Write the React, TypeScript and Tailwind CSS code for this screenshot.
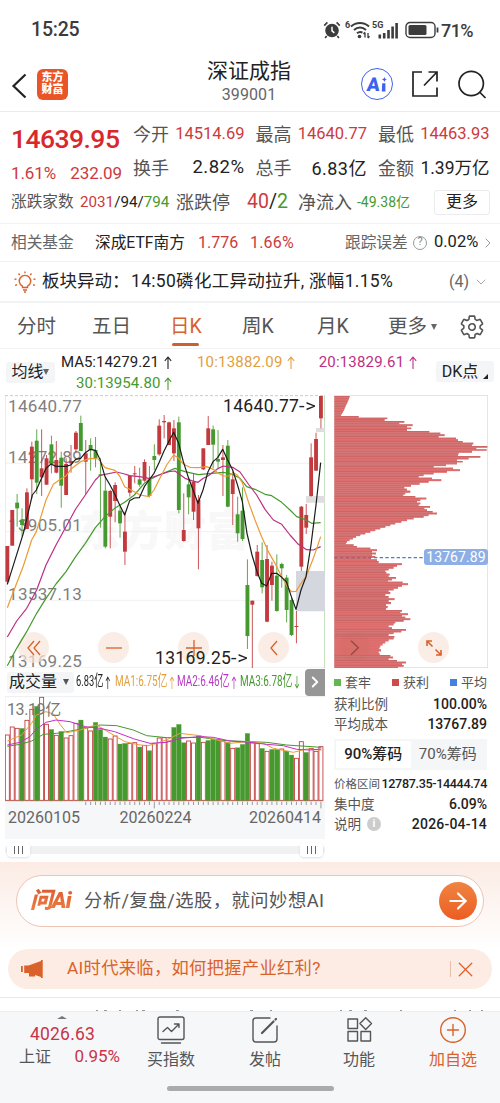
import { ReactNode } from 'react';
import { ArrowRight, ChevronDown, ChevronRight, X } from 'lucide-react';
import { IoSettingsOutline } from 'react-icons/io5';

type Candle = ['r' | 'g', number, number, number, number];
type Point = [number, number];

const RED = '#c23a3d';
const GREEN = '#46992f';
const STEP = 14.7;
const FIRST_X = 22;

// direction, high, body top, body bottom, low
const candles: Candle[] = [
  ['r', 468, 468, 575, 583], ['r', 360, 360, 467, 467], ['g', 312, 338, 355, 410], ['g', 355, 390, 405, 440],
  ['r', 295, 307, 417, 417], ['r', 155, 170, 268, 325], ['g', 118, 152, 278, 312], ['r', 118, 235, 262, 318],
  ['r', 195, 205, 284, 284], ['g', 137, 163, 222, 250], ['r', 153, 210, 248, 250], ['g', 185, 203, 287, 353],
  ['r', 205, 222, 315, 315], ['r', 165, 213, 220, 248], ['r', 123, 128, 178, 190], ['g', 77, 99, 183, 183],
  ['r', 150, 190, 215, 312], ['g', 145, 165, 180, 242], ['g', 141, 180, 205, 232], ['g', 205, 253, 257, 413],
  ['g', 262, 302, 470, 475], ['r', 300, 303, 380, 475], ['r', 277, 285, 333, 397], ['g', 350, 362, 400, 443],
  ['r', 365, 425, 485, 525], ['r', 255, 257, 308, 320], ['r', 228, 250, 253, 280], ['g', 233, 268, 284, 290],
  ['r', 208, 216, 272, 275], ['g', 228, 268, 318, 322], ['g', 163, 198, 210, 240], ['r', 88, 107, 193, 197],
  ['r', 75, 93, 97, 145], ['r', 95, 97, 165, 165], ['r', 90, 115, 190, 213], ['g', 80, 97, 360, 370],
  ['r', 310, 420, 453, 455], ['g', 270, 283, 322, 373], ['r', 252, 275, 365, 390], ['r', 315, 330, 415, 538],
  ['r', 175, 175, 238, 240], ['r', 78, 115, 165, 165], ['g', 107, 118, 164, 235], ['g', 120, 207, 215, 235],
  ['r', 165, 202, 210, 318], ['g', 150, 167, 350, 352], ['r', 245, 268, 312, 405], ['g', 320, 373, 430, 455],
  ['g', 292, 362, 447, 453], ['g', 508, 585, 738, 777], ['r', 632, 632, 644, 835], ['r', 465, 485, 558, 560],
  ['g', 457, 510, 592, 610], ['r', 465, 507, 695, 697], ['r', 515, 527, 585, 632], ['g', 493, 557, 663, 665],
  ['g', 518, 522, 535, 593], ['g', 555, 563, 660, 697], ['g', 620, 630, 735, 738], ['r', 663, 708, 711, 760],
  ['r', 348, 350, 530, 543], ['r', 342, 375, 413, 432], ['r', 160, 202, 318, 320], ['r', 128, 147, 242, 243],
  ['r', 18, 18, 85, 115],
];

const ma5: Point[] = [
  [22, 583], [70, 430], [97, 315], [109, 300], [138, 235], [153, 222], [168, 229], [198, 229], [212, 225], [227, 208],
  [242, 205], [256, 188], [271, 178], [286, 181], [300, 208], [315, 260], [330, 285], [344, 312], [359, 345], [374, 375],
  [389, 332], [403, 324], [418, 323], [433, 290], [447, 270], [462, 250], [477, 218], [491, 185], [506, 155], [521, 127],
  [536, 160], [550, 215], [565, 262], [580, 302], [594, 340], [609, 300], [624, 245], [639, 215], [653, 203], [668, 178],
  [683, 210], [698, 240], [712, 283], [727, 335], [741, 430], [756, 495], [771, 545], [785, 580], [800, 588], [815, 550],
  [830, 550], [845, 562], [859, 575], [874, 620], [888, 658], [903, 600], [918, 560], [933, 465], [948, 345], [962, 218],
];
const ma10: Point[] = [
  [22, 653], [50, 580], [70, 528], [95, 450], [109, 425], [138, 330], [160, 283], [185, 265], [198, 258], [212, 238],
  [242, 215], [271, 205], [295, 207], [315, 233], [345, 241], [359, 258], [374, 290], [403, 305], [420, 315], [447, 320],
  [462, 300], [477, 270], [500, 225], [521, 195], [536, 205], [550, 222], [570, 232], [595, 233], [620, 230], [640, 238],
  [653, 248], [670, 258], [687, 258], [700, 248], [712, 255], [727, 278], [745, 335], [765, 390], [785, 440], [805, 485],
  [825, 520], [845, 560], [862, 590], [874, 605], [888, 604], [903, 580], [918, 560], [940, 505], [962, 440],
];
const ma20: Point[] = [
  [22, 741], [50, 693], [80, 655], [110, 600], [138, 525], [168, 465], [198, 410], [227, 357], [256, 315], [286, 270],
  [300, 256], [350, 246], [374, 252], [389, 257], [418, 260], [447, 265], [477, 255], [506, 245], [525, 243], [555, 265],
  [575, 272], [594, 277], [610, 265], [625, 257], [655, 235], [670, 228], [698, 232], [720, 246], [745, 282], [770, 315],
  [795, 358], [820, 390], [845, 403], [870, 435], [895, 463], [920, 479], [940, 480], [962, 470],
];
const ma30: Point[] = [
  [22, 827], [50, 775], [80, 725], [110, 670], [138, 625], [168, 582], [198, 545], [227, 500], [256, 460], [286, 413],
  [315, 380], [344, 355], [374, 337], [403, 315], [433, 280], [447, 270], [477, 255], [506, 243], [525, 235], [555, 245],
  [595, 254], [635, 250], [670, 247], [695, 252], [720, 265], [740, 290], [765, 298], [795, 313], [815, 317], [845, 337],
  [870, 360], [890, 380], [915, 388], [935, 400], [962, 398],
];

const volumes: number[] = [
  210, 186, 190, 190, 166, 133, 124, 97, 178, 193, 211, 199, 219, 212, 175, 165, 187, 198, 172, 193, 216, 222, 213, 237,
  235, 235, 233, 246, 241, 257, 236, 219, 218, 228, 187, 178, 233, 228, 234, 211, 232, 226, 223, 224, 228, 232, 250, 248,
  238, 205, 234, 236, 250, 259, 253, 253, 252, 258, 270, 280, 230, 262, 250, 259, 245,
];
const volumeDirs = 'rrrgrrgrrgrgrrrgrrgggrrggrrgrgrrrrgggrrgrgggrgrgggrrgrggrggrrgrrr';

const volMa1: Point[] = [
  [22, 228], [65, 210], [95, 175], [109, 150], [138, 140], [160, 147], [180, 178], [200, 203], [240, 195], [270, 185],
  [290, 180], [320, 198], [345, 213], [375, 230], [410, 238], [440, 243], [480, 232], [510, 220], [540, 205], [600, 212],
  [640, 222], [690, 235], [740, 230], [790, 235], [820, 250], [880, 262], [920, 252], [964, 255],
];
const volMa2: Point[] = [
  [22, 240], [60, 232], [90, 215], [109, 192], [138, 172], [168, 165], [210, 170], [256, 185], [300, 190], [344, 200],
  [403, 222], [450, 235], [500, 232], [540, 220], [600, 215], [640, 217], [690, 228], [750, 232], [800, 238], [850, 242],
  [890, 253], [930, 255], [964, 252],
];
const volMa3: Point[] = [
  [22, 244], [60, 238], [95, 228], [130, 208], [170, 205], [212, 198], [270, 187], [300, 180], [350, 182], [400, 195],
  [440, 212], [500, 218], [600, 217], [680, 227], [750, 230], [800, 232], [860, 240], [964, 247],
];

// cost distribution: top edge of each bar and how far right it reaches
const chips: Point[] = [
  [18, 73], [23, 71], [28, 69], [33, 67], [38, 65], [43, 62], [48, 60], [53, 58], [58, 56], [63, 53], [68, 50], [73, 47],
  [78, 100], [83, 186], [87, 178], [93, 237], [98, 222], [103, 262], [108, 245], [113, 258], [117, 245], [123, 312],
  [128, 345], [133, 358], [138, 340], [143, 392], [148, 398], [153, 412], [158, 444], [163, 440], [168, 486], [173, 453],
  [178, 484], [182, 440], [188, 400], [193, 398], [198, 465], [203, 430], [208, 395], [213, 412], [217, 395], [223, 362],
  [228, 325], [233, 383], [238, 404], [243, 365], [248, 325], [253, 295], [258, 280], [263, 320], [268, 348], [273, 310],
  [278, 283], [284, 257], [290, 237], [296, 245], [302, 255], [308, 240], [313, 234], [318, 270], [323, 303], [328, 285],
  [333, 275], [338, 285], [343, 280], [348, 314], [353, 297], [358, 305], [363, 322], [368, 335], [373, 310], [378, 295],
  [383, 265], [388, 245], [393, 228], [398, 210], [403, 195], [408, 180], [413, 165], [418, 150], [423, 135], [428, 120],
  [433, 105], [438, 92], [443, 83], [448, 73], [453, 65], [458, 62], [463, 85], [468, 95], [473, 135], [478, 155],
  [483, 140], [488, 152], [493, 140], [498, 150], [503, 137], [508, 155], [513, 160], [520, 230], [525, 215], [530, 205],
  [536, 190], [541, 180], [546, 183], [551, 193], [556, 190], [561, 212], [566, 200], [571, 188], [575, 232], [580, 248],
  [585, 230], [590, 218], [596, 205], [601, 190], [606, 195], [612, 180], [618, 190], [625, 208], [630, 190], [636, 197],
  [642, 182], [648, 187], [654, 182], [660, 230], [665, 225], [670, 248], [675, 230], [680, 240], [685, 255], [690, 235],
  [695, 210], [700, 205], [706, 190], [712, 200], [717, 242], [722, 228], [727, 205], [732, 190], [738, 207], [743, 205],
  [748, 190], [754, 180], [760, 172], [766, 165], [772, 162], [778, 167], [784, 160], [790, 163], [795, 195], [800, 203],
  [805, 190], [810, 215], [815, 242], [820, 230], [825, 235], [830, 218],
];

const toLine = (points: Point[]) => points.map((p) => p.join(',')).join(' ');
const candleX = (i: number) => FIRST_X + i * STEP;

function Arrow({ down = false, className = '' }: { down?: boolean; className?: string }) {
  return (
    <svg viewBox="0 0 8 13" className={`h-[13px] w-2 shrink-0 ${down ? 'rotate-180' : ''} ${className}`} fill="none" stroke="currentColor" strokeWidth="1.1">
      <path d="M4 13V1M0.8 4.8L4 1l3.2 3.8" />
    </svg>
  );
}

function StatusBar() {
  return (
    <div className="flex h-[60px] items-center justify-between pl-[31px] pr-[27px] text-[#3c3c3c]">
      <span className="text-[19.5px] font-medium tracking-[-0.2px]">15:25</span>
      <div className="flex items-center">
        <svg viewBox="0 0 18 18" className="mr-1 h-[18px] w-[18px]">
          <circle cx="9" cy="9.5" r="6.8" fill="#3c3c3c" />
          <path d="M1.2 4.6L4.4 1.4M16.8 4.6L13.6 1.4M3.6 15L2.2 17M14.4 15l1.4 2" stroke="#3c3c3c" strokeWidth="1.6" />
          <path d="M9 5.8v4l2.4 2" stroke="#fff" strokeWidth="1.5" fill="none" />
        </svg>
        <span className="-mt-2 text-[9px] font-bold">6</span>
        <svg viewBox="0 0 20 18" className="h-[18px] w-5" fill="none" stroke="#3c3c3c" strokeWidth="2">
          <path d="M1 5.5C6 0.8 14 0.8 19 5.5M4 9c3.5-3.2 8.500-3.200 12 0M7 12.3c1.8-1.6 4-1.6 5.5-.6" />
          <circle cx="9.5" cy="15.5" r="1.8" fill="#3c3c3c" stroke="none" />
          <path d="M15 11.5v5M13.5 13l1.5-1.7M18 12v5M19.5 15.3L18 17" strokeWidth="1.3" />
        </svg>
        <div className="relative ml-[2px] h-[18px] w-[29px]">
          <span className="absolute left-0 top-0 text-[9px] font-bold leading-[9px]">5G</span>
          <svg viewBox="0 0 29 18" className="h-[18px] w-[29px]" fill="#3c3c3c">
            <path d="M6.500 13.500h2.600v4H6.500zM10.900 12h2.600v5.500h-2.600zM15.200 9h2.600v8.500h-2.600zM19.300 5.500h2.600v12h-2.600zM23.300 2h2.600v15.500h-2.600z" />
          </svg>
        </div>
        <svg viewBox="0 0 34 18" className="ml-1 h-[18px] w-[34px]">
          <rect x="1" y="1.5" width="29" height="15" rx="4" fill="none" stroke="#3c3c3c" strokeWidth="1.4" />
          <rect x="3.5" y="4" width="18" height="10" rx="1.500" fill="#3c3c3c" />
          <path d="M32.500 6.500v5" stroke="#3c3c3c" strokeWidth="1.8" />
        </svg>
        <span className="ml-[2px] text-[18px] font-medium tracking-[-0.6px]">71%</span>
      </div>
    </div>
  );
}

function Header() {
  return (
    <header className="flex h-[52px] items-center border-b border-[#e8ebee] px-[11px] pb-[8px] text-[#222]">
      <svg viewBox="0 0 16 26" className="mt-2 h-[26px] w-4" fill="none" stroke="#222" strokeWidth="2.2">
        <path d="M14.5 1.5L2.5 13l12 11.5" />
      </svg>
      <div className="ml-[10px] mt-[5px] flex h-[31px] w-[31px] flex-col items-center justify-center rounded-[6px] bg-[#ea5527] text-[11px] font-black leading-[12.5px] text-white">
        <span>东方</span>
        <span>财富</span>
      </div>
      <div className="ml-[139px] flex w-[84px] flex-col items-center whitespace-nowrap">
        <span className="text-[21px] leading-[26px]">深证成指</span>
        <span className="text-[16px] leading-[22px] tracking-[0.1px] text-[#666]">399001</span>
      </div>
      <div className="ml-[70px] mt-[5px] flex h-8 w-8 items-center justify-center gap-[1px] rounded-full border-[1.5px] border-[#4263e8] text-[19px] font-black leading-none text-[#3f62ee]">
        <span className="-skew-x-6">A</span>
        <svg viewBox="0 0 6 15" className="h-[15px] w-[6px]" fill="#3f62ee">
          <path d="M1.200 6.200h3.200V14.500H.8zM3.400 0l.8 1.700 1.700.8-1.700.8-.8 1.700-.8-1.700-1.700-.8 1.700-.8z" />
        </svg>
      </div>
      <svg viewBox="0 0 28 28" className="ml-[18px] mt-[5px] h-7 w-7" fill="none" stroke="#222" strokeWidth="1.7">
        <path d="M11 2H2v24h24v-8.500M17.500 2H26v9.500M26 2L13 15.500" />
      </svg>
      <svg viewBox="0 0 30 30" className="ml-[18px] mt-[5px] h-[30px] w-[30px]" fill="none" stroke="#222" strokeWidth="1.7">
        <circle cx="14.2" cy="14.5" r="12.2" />
        <path d="M22.500 23l6 6" />
      </svg>
    </header>
  );
}

function Stat({ label, value, className = 'text-[#222]' }: { label: string; value: string; className?: string }) {
  return (
    <div className="flex h-[34px] w-[111.5px] items-center justify-between whitespace-nowrap">
      <span className="text-[18px] text-[#555]">{label}</span>
      <span className={className}>{value}</span>
    </div>
  );
}

function Quote() {
  return (
    <section className="h-[112px] border-b border-[#f1f2f4] pl-[11px] pt-[5px]">
      <div className="flex">
        <div className="w-[122px] text-[#cc3a3d]">
          <div className="pt-[5px] text-[26.5px] font-medium leading-[34px] tracking-[-0.55px] text-[#d8282c]">14639.95</div>
          <div className="flex justify-between pr-[11px] pt-[6px] text-[17px] leading-[22px] tracking-[-0.1px]">
            <span>1.61%</span>
            <span>232.09</span>
          </div>
        </div>
        <div className="grid grid-cols-3 gap-x-[11px]">
          <Stat label="今开" value="14514.69" className="text-[16.5px] text-[#cc3a3d]" />
          <Stat label="最高" value="14640.77" className="text-[16.5px] text-[#cc3a3d]" />
          <Stat label="最低" value="14463.93" className="text-[16.5px] text-[#cc3a3d]" />
          <Stat label="换手" value="2.82%" className="text-[18.5px] tracking-[0.5px] text-[#222]" />
          <Stat label="总手" value="6.83亿" className="text-[18px] tracking-[0.5px] text-[#222]" />
          <Stat label="金额" value="1.39万亿" className="text-[17.5px] text-[#222]" />
        </div>
      </div>
      <div className="flex h-[34px] items-center whitespace-nowrap text-[#222]">
        <span className="w-[69px] text-[15.7px] text-[#555]">涨跌家数</span>
        <span className="w-[96px] text-[15.2px]">
          <span className="text-[#cc3a3d]">2031</span>/94/<span className="text-[#46992f]">794</span>
        </span>
        <span className="w-[71px] text-[18px] text-[#555]">涨跌停</span>
        <span className="w-[51px] text-[19.5px]">
          <span className="text-[#cc3a3d]">40</span>/<span className="text-[#46992f]">2</span>
        </span>
        <span className="w-[59px] text-[18px] text-[#555]">净流入</span>
        <span className="w-[77px] text-[14px] text-[#46992f]">-49.38亿</span>
        <button className="h-[25px] w-[56px] rounded-[3px] border border-[#ececee] text-[16px] leading-[22px]">更多</button>
      </div>
    </section>
  );
}

function FundRow() {
  return (
    <div className="flex h-[38px] items-center whitespace-nowrap border-b border-[#f1f2f4] pl-[11px] text-[15.7px] text-[#222]">
      <span className="w-[84px] text-[#666]">相关基金</span>
      <span className="w-[103px] text-[15.7px]">深成ETF南方</span>
      <span className="w-[52px] text-[16px] text-[#cc3a3d]">1.776</span>
      <span className="w-[95px] text-[16px] tracking-[0.2px] text-[#cc3a3d]">1.66%</span>
      <span className="w-[68px] text-[#666]">跟踪误差</span>
      <span className="flex h-[14px] w-[14px] items-center justify-center rounded-full border border-[#999] text-[11px] text-[#888]">?</span>
      <span className="ml-[7px] w-[46px] text-[16.5px]">0.02%</span>
      <ChevronRight className="h-4 w-4 text-[#999]" strokeWidth={1.5} />
    </div>
  );
}

function NewsRow() {
  return (
    <div className="flex h-[41px] items-center whitespace-nowrap border-b-2 border-[#f1f2f4] pl-[14px] text-[17.5px] text-[#222]">
      <svg viewBox="0 0 22 22" className="h-[22px] w-[22px]" fill="none" stroke="#d9622b" strokeWidth="1.4">
        <path d="M8.500 16.500v-1.300a5.700 5.700 0 1 1 5 0v1.300zM9 19h4M10 21h2" />
        <path d="M11 .5v1.800M4.500 2.500l1.200 1.500M17.500 2.500l-1.200 1.500M.5 8l2 .4M21.500 8l-2 .4M1.200 14.500l1.800-.8M20.800 14.500l-1.800-.8" />
      </svg>
      <span className="ml-[6px] w-[89px]">板块异动：</span>
      <span className="w-[318px] tracking-[0.3px]">14:50磷化工异动拉升, 涨幅1.15%</span>
      <span className="w-[24px] text-[16px] text-[#666]">(4)</span>
      <ChevronDown className="h-4 w-4 text-[#999]" strokeWidth={1.3} />
    </div>
  );
}

function Tabs() {
  return (
    <nav className="flex h-[46px] items-center whitespace-nowrap border-b border-[#f1f2f4] pl-[17px] pt-[3px] text-[19.5px] text-[#555]">
      <span className="w-[75px]">分时</span>
      <span className="w-[78px]">五日</span>
      <span className="relative w-[72px] text-[#d9622b]">
        日K
        <i className="absolute -bottom-[4px] left-[2px] h-[3px] w-[27px] rounded-full bg-[#cd602f]" />
      </span>
      <span className="w-[75px]">周K</span>
      <span className="w-[71px]">月K</span>
      <span>更多</span>
      <span className="ml-1 border-x-[3.5px] border-t-[6px] border-x-transparent border-t-[#666]" />
      <IoSettingsOutline className="ml-[22px] h-[26px] w-[26px]" />
    </nav>
  );
}

function Averages() {
  return (
    <div className="flex h-[45px] items-center whitespace-nowrap px-[6px] text-[15px]">
      <div className="mt-[1px] flex h-[21px] w-[49px] items-center justify-center rounded-[3px] bg-[#f4f5f7] text-[#222]">
        <span className="text-[16px]">均线</span>
        <span className="border-x-[3.5px] border-t-[6px] border-x-transparent border-t-[#666]" />
      </div>
      <div className="ml-[6px] flex h-full w-[376px] flex-col pt-[3px] leading-[21px]">
        <div className="flex h-[21px] items-center">
          <span className="text-[#222]">MA5:14279.21</span>
          <Arrow className="ml-[5px] text-[#222]" />
          <span className="ml-[25px] tracking-[0.2px] text-[#e2a040]">10:13882.09</span>
          <Arrow className="ml-1 text-[#e2a040]" />
          <span className="ml-[24px] tracking-[0.2px] text-[#bd2f84]">20:13829.61</span>
          <Arrow className="ml-[5px] text-[#bd2f84]" />
        </div>
        <div className="flex h-[21px] items-center pl-[15px] text-[#46992f]">
          <span className="tracking-[0.1px]">30:13954.80</span>
          <Arrow className="ml-1" />
        </div>
      </div>
      <div className="flex h-[21px] w-[58px] items-center justify-center rounded-[3px] bg-[#f4f5f7] text-[16px] text-[#222]">
        DK点
        <svg viewBox="0 0 6 6" className="ml-[5px] mt-[10px] h-[5px] w-[5px]" fill="#222">
          <path d="M6 0v6H0z" />
        </svg>
      </div>
    </div>
  );
}

function RoundButton({ className, children }: { className: string; children: ReactNode }) {
  return (
    <button className={`absolute top-[237px] flex h-[31px] w-[31px] items-center justify-center rounded-full bg-[#f8e5da]/70 ${className}`}>
      <svg viewBox="0 0 16 16" className="h-4 w-4" fill="none" stroke="#d9622b" strokeWidth="1.3">
        {children}
      </svg>
    </button>
  );
}

function PriceMark({ className, children }: { className: string; children: string }) {
  return (
    <span className={`absolute flex whitespace-nowrap text-[17.5px] text-[#222] ${className}`}>
      {children}
      <span className="w-[19px] origin-left scale-x-[1.15] tracking-[0.6px]">-&gt;</span>
    </span>
  );
}

function PriceChart() {
  return (
    <div className="relative h-[273px] w-[320px] text-[17px] leading-5 tracking-[0.35px] text-[#808080]">
      <span className="absolute left-[73px] top-[112px] text-[42px] font-black leading-[50px] tracking-[1px] text-[#f8f8f8]">东方财富</span>
      <svg viewBox="15 15 960 819" className="absolute inset-0 h-[273px] w-[320px]" fill="none">
        <path d="M15 220H975M15 425H975M15 631H975M15 832H975" stroke="#f0f1f3" strokeWidth="3" />
        <path d="M16 15V834" stroke="#e8e8e8" strokeWidth="3" />
        <path d="M15 17H975" stroke="#d8c2c2" strokeWidth="3" strokeDasharray="9 6" />
        <path d="M974 15V834" stroke="#b9dcb5" strokeWidth="3" />
        <path d="M948 114h27v12h-27zM918 318h57v20h-57z" fill="#dedede" />
        <path d="M888 543h87v121h-87z" fill="#d5d7de" />
      </svg>
      <span className="absolute left-[3px] top-[1px]">14640.77</span>
      <span className="absolute left-[3px] top-[52px]">14272.89</span>
      <span className="absolute left-[3px] top-[120px]">13905.01</span>
      <span className="absolute left-[3px] top-[189px]">13537.13</span>
      <span className="absolute left-[3px] top-[256px]">13169.25</span>
      <RoundButton className="left-[13px]">
        <path d="M8 1L2 8l6 7M14 1L8 8l6 7" />
      </RoundButton>
      <RoundButton className="left-[93px]">
        <path d="M0 8h16" />
      </RoundButton>
      <RoundButton className="left-[173px]">
        <path d="M0 8h16M8 0v16" />
      </RoundButton>
      <RoundButton className="left-[253px]">
        <path d="M11 1L5 8l6 7" />
      </RoundButton>
      <svg viewBox="15 15 960 819" className="absolute inset-0 h-[273px] w-[320px]" fill="none">
        {candles.map(([dir, high, top, bottom, low], i) => {
          const color = dir === 'r' ? RED : GREEN;
          return (
            <g key={i} fill={color}>
              <rect x={candleX(i) - 1.5} y={high} width="3" height={low - high} opacity="0.85" />
              <rect x={candleX(i) - 5.8} y={top} width="11.6" height={bottom - top} />
            </g>
          );
        })}
        <g strokeWidth="3.6" strokeLinejoin="round">
          <polyline points={toLine(ma30)} stroke="#46992f" />
          <polyline points={toLine(ma20)} stroke="#bd2f84" />
          <polyline points={toLine(ma10)} stroke="#eb9c35" />
          <polyline points={toLine(ma5)} stroke="#1c1c1c" />
        </g>
      </svg>
      <PriceMark className="left-[218px] top-[1px]">14640.77</PriceMark>
      <PriceMark className="left-[150px] top-[253px]">13169.25</PriceMark>
    </div>
  );
}

function VolumePanel() {
  return (
    <>
      <div className="flex h-[28px] items-center whitespace-nowrap pl-[2px] text-[15.5px]">
        <div className="flex h-[21px] w-[67px] items-center rounded-[3px] bg-[#f4f5f7] pl-[2px] text-[16px] text-[#222]">
          成交量
          <span className="ml-[6px] border-x-[3.5px] border-t-[6px] border-x-transparent border-t-[#555]" />
        </div>
        <div className="w-[41px] pl-[2px]">
          <div className="flex w-[60px] origin-left scale-x-[0.6] items-center text-[#222]">6.83亿<Arrow className="ml-[3px]" /></div>
        </div>
        <div className="w-[62px]">
          <div className="flex w-[90px] origin-left scale-x-[0.64] items-center text-[#e2a040]">MA1:6.75亿<Arrow className="ml-[3px]" /></div>
        </div>
        <div className="w-[63px]">
          <div className="flex w-[90px] origin-left scale-x-[0.64] items-center text-[#b53bc4]">MA2:6.46亿<Arrow className="ml-[3px]" /></div>
        </div>
        <div className="w-[65px]">
          <div className="flex w-[90px] origin-left scale-x-[0.64] items-center text-[#46992f]">MA3:6.78亿<Arrow down className="ml-[3px]" /></div>
        </div>
        <div className="flex h-[27px] w-5 items-center justify-center rounded-l-[4px] bg-[#969696] text-white">
          <ChevronRight className="h-[18px] w-[18px]" strokeWidth={2.5} />
        </div>
      </div>
      <div className="relative h-[106px]">
        <svg viewBox="15 93 960 345" className="h-[115px] w-[320px]" fill="none">
          <path d="M15 95H975M15 95V408" stroke="#eceef0" strokeWidth="3" />
          <path d="M15 408H975V438H15z" fill="#f6f7f9" />
          {volumes.map((top, i) =>
            volumeDirs[i] === 'g' ? (
              <rect key={i} x={candleX(i) - 7} y={top} width="14" height={408 - top} fill={GREEN} stroke="#6fb257" strokeWidth="0.8" />
            ) : (
              <rect key={i} x={candleX(i) - 6} y={top} width="12" height={406 - top} fill="#fff" stroke={RED} strokeWidth="2.6" />
            ),
          )}
          <path d="M16 407H970" stroke="#b06a55" strokeWidth="2" />
          {volumes.slice(16).map((_, i) => (
            <path key={i} d={`M${candleX(i + 16)} 410v${i === 14 || i === 48 ? 20 : 10}`} stroke="#888" strokeWidth="2.5" />
          ))}
          <g strokeWidth="3" strokeLinejoin="round">
            <polyline points={toLine(volMa3)} stroke="#46992f" />
            <polyline points={toLine(volMa1)} stroke="#eb9c35" />
            <polyline points={toLine(volMa2)} stroke="#c22fc9" />
          </g>
        </svg>
        <span className="absolute left-[2px] top-[4px] text-[16px] leading-5 tracking-[-0.4px] text-[#777]">13.19亿</span>
      </div>
      <div className="flex h-[37px] justify-between bg-[#f6f7f9] pl-[3px] pr-[4px] pt-[6px] text-[16px] leading-5 text-[#666]">
        <span>20260105</span>
        <span className="pr-[18px]">20260224</span>
        <span>20260414</span>
      </div>
      <div className="flex h-[22px] items-center">
        <div className="flex h-2 w-[320px] items-center justify-between rounded-full bg-[#f0f1f3] px-[2px]">
          {['start', 'end'].map((side) => (
            <span key={side} className="flex h-[14px] w-[23px] items-center justify-center gap-[3px] rounded-[4px] bg-white shadow">
              <i className="h-2 w-px bg-[#666]" />
              <i className="h-2 w-px bg-[#666]" />
              <i className="h-2 w-px bg-[#666]" />
            </span>
          ))}
        </div>
      </div>
    </>
  );
}

function ChipChart() {
  return (
    <div className="relative h-[273px] w-[154px]">
      <svg viewBox="26 15 462 819" className="h-[273px] w-[154px]">
        <rect x="27" y="16" width="460" height="817" fill="none" stroke="#dcdcdc" strokeWidth="2.5" />
        {chips.map(([y, right], i) => {
          const next = i + 1 < chips.length ? chips[i + 1][0] : 834;
          return (
            <g key={y}>
              <rect x="27" y={y} width={right - 27} height={next - y + 0.5} fill="#dd6d6c" />
              <rect x="27" y={y} width={right - 27} height="2" fill="#b05a5a" opacity="0.5" />
            </g>
          );
        })}
        <path d="M27 503H296" stroke="#4b7bd0" strokeWidth="3.5" strokeDasharray="10 7" />
        <circle cx="87" cy="772" r="45" fill="#b9694f" opacity="0.12" />
        <path d="M77 752l22 21-22 21" fill="none" stroke="#8f4a44" strokeWidth="4" />
      </svg>
      <span className="absolute right-0 top-[154px] h-[16px] w-[64px] rounded-[3px] bg-[#8eaee6] text-center text-[14px] leading-4 tracking-[0.1px] text-white">
        13767.89
      </span>
      <RoundButton className="left-[84px]">
        <path d="M6.5 6.5L1 1m0 5V1h5M9.5 9.5L15 15m0-5v5h-5" strokeWidth="1.6" />
      </RoundButton>
    </div>
  );
}

function ChipPanel() {
  return (
    <div className="flex w-[153px] flex-col whitespace-nowrap text-[13.5px] leading-5 text-[#555]">
      <ChipChart />
      <div className="flex h-[26px] items-center justify-between pt-[3px] text-[13px]">
        <span className="flex items-center gap-[4px]"><i className="h-[7px] w-[7px] bg-[#62b84e]" />套牢</span>
        <span className="flex items-center gap-[4px]"><i className="h-[7px] w-[7px] bg-[#cf4a4a]" />获利</span>
        <span className="flex items-center gap-[4px]"><i className="h-[7px] w-[7px] bg-[#4380e0]" />平均</span>
      </div>
      <div className="flex justify-between"><span>获利比例</span><b className="text-[14px] font-medium text-[#222]">100.00%</b></div>
      <div className="flex justify-between"><span>平均成本</span><b className="text-[14px] font-medium text-[#222]">13767.89</b></div>
      <div className="mt-[5px] grid h-[31px] grid-cols-2 bg-[#f5f6f8] p-[2px] text-center text-[15px] leading-[27px]">
        <span className="bg-white font-medium text-[#222]">90%筹码</span>
        <span>70%筹码</span>
      </div>
      <div className="mt-[4px] flex justify-between">
        <span className="text-[11.5px]">价格区间</span>
        <b className="text-[12.6px] font-medium tracking-[-0.35px] text-[#222]">12787.35-14444.74</b>
      </div>
      <div className="flex justify-between"><span>集中度</span><b className="text-[14px] font-medium text-[#222]">6.09%</b></div>
      <div className="flex items-center justify-between">
        <span className="flex items-center gap-[6px]">
          说明
          <i className="flex h-[14px] w-[14px] items-center justify-center rounded-full bg-[#ccc] text-[11px] font-bold not-italic text-white">i</i>
        </span>
        <b className="text-[14px] font-medium tracking-[0.2px] text-[#222]">2026-04-14</b>
      </div>
    </div>
  );
}

function AskBar() {
  return (
    <section className="flex h-[87px] flex-col bg-gradient-to-b from-[#fbebe4] to-white px-4 pt-[13px]">
      <div className="flex h-[52px] items-center rounded-full border border-[#eec5b4] bg-white pl-[13px] pr-[6px]">
        <span className="w-[54px] whitespace-nowrap bg-gradient-to-b from-[#d9542a] to-[#f08a4b] bg-clip-text text-[22.5px] font-black italic tracking-[-0.8px] text-transparent">
          问Ai
        </span>
        <span className="flex-1 whitespace-nowrap text-[18.3px] tracking-[0.5px] text-[#555]">分析/复盘/选股，就问妙想AI</span>
        <span className="flex h-[38px] w-[38px] items-center justify-center rounded-full bg-gradient-to-b from-[#ef8440] to-[#ec5c22] text-white">
          <ArrowRight className="h-[26px] w-[26px]" strokeWidth={2} />
        </span>
      </div>
    </section>
  );
}

function Banner() {
  return (
    <div className="mx-2 flex h-10 items-center rounded-full bg-[#fcece4] pl-[13px] pr-[14px] text-[#d9622b]">
      <svg viewBox="0 0 22 18" className="h-[18px] w-[22px]" fill="#d9622b">
        <path d="M0 6h1.8v6H0zM3.2 5.5h4.300L20 1V0h1.700v18H20v-1l-6-2v1.500H8V13H3.200z" />
      </svg>
      <span className="ml-[24px] flex-1 whitespace-nowrap text-[17.3px] tracking-[0.3px]">AI时代来临，如何把握产业红利?</span>
      <i className="h-4 w-px bg-[#eabfa9]" />
      <X className="ml-[2px] h-[25px] w-[25px]" strokeWidth={1.2} />
    </div>
  );
}

function NavItem({ label, className = 'text-[#555]', children }: { label: string; className?: string; children: ReactNode }) {
  return (
    <div className={`flex w-[94px] flex-col items-center ${className}`}>
      <svg viewBox="0 0 28 28" className="mt-[4px] h-7 w-7" fill="none" stroke="currentColor" strokeWidth="1.4" strokeLinecap="round" strokeLinejoin="round">
        {children}
      </svg>
      <span className="mt-[4px] text-[16px] leading-6">{label}</span>
    </div>
  );
}

function BottomNav() {
  return (
    <footer className="h-[92px] bg-[#f6f7f9]">
      <div className="flex h-[70px]">
        <div className="flex w-[124px] flex-col pl-[19px] text-[17px] text-[#cb3348]">
          <i className="ml-[38px] mt-[4px] h-0 w-0 border-x-[5px] border-b-[3px] border-x-transparent border-b-[#777]" />
          <span className="ml-[11px] mt-[4px] text-[17.5px] leading-[22px] tracking-[0.2px]">4026.63</span>
          <div className="flex w-[101px] justify-between leading-[23px]">
            <span className="text-[16px] text-[#555]">上证</span>
            <span>0.95%</span>
          </div>
        </div>
        <NavItem label="买指数">
          <rect x="1" y="1" width="26" height="22.5" rx="2" />
          <path d="M4.5 27h19M6 15.500l4.500-4 4 4L22 8M17.500 8H22v3.500" />
        </NavItem>
        <NavItem label="发帖">
          <path d="M19 2H5a3 3 0 0 0-3 3v18a3 3 0 0 0 3 3h18a3 3 0 0 0 3-3V10" />
          <path d="M11 17L22.500 5.500M24.500 3.500l.5-.5" strokeWidth="2.2" />
        </NavItem>
        <NavItem label="功能">
          <path d="M3 3h9.500v9.500H3zM3 15.500h9.500V25H3zM16 15.500h9.500V25H16zM20.700 1.800l5.800 5.800-5.800 5.800-5.800-5.800z" />
        </NavItem>
        <NavItem label="加自选" className="text-[#d9622b]">
          <circle cx="14" cy="14" r="12.3" />
          <path d="M14 8.500v11M8.500 14h11" />
        </NavItem>
      </div>
      <div className="mx-auto mt-[4px] h-[5px] w-[167px] rounded-full bg-[#a9abad]" />
    </footer>
  );
}

export default function App() {
  return (
    <div className="h-[1103px] w-[500px] overflow-hidden bg-white font-[family-name:Roboto,'Noto_Sans_CJK_SC',sans-serif]">
      <StatusBar />
      <Header />
      <Quote />
      <FundRow />
      <NewsRow />
      <Tabs />
      <Averages />
      <main className="flex h-[468px] gap-[9px] pl-[5px] pt-[1px]">
        <div className="w-[320px]">
          <PriceChart />
          <VolumePanel />
        </div>
        <ChipPanel />
      </main>
      <AskBar />
      <Banner />
      <div className="mt-2 flex h-[15px] items-end border-b border-t border-b-[#eceef0] border-t-[#e8e8e8] pl-[96px]">
        <svg viewBox="0 0 392 1" className="h-px w-[392px]">
          <path d="M0 .5h2M8 .5h3M23 .5h2M40 .5h2M46 .5h3M80 .5h3M154 .5h3M174 .5h2M244 .5h2M253 .5h3M268 .5h3M304 .5h2M358 .5h2M373 .5h2M385 .5h2" stroke="#999" />
        </svg>
      </div>
      <BottomNav />
    </div>
  );
}
